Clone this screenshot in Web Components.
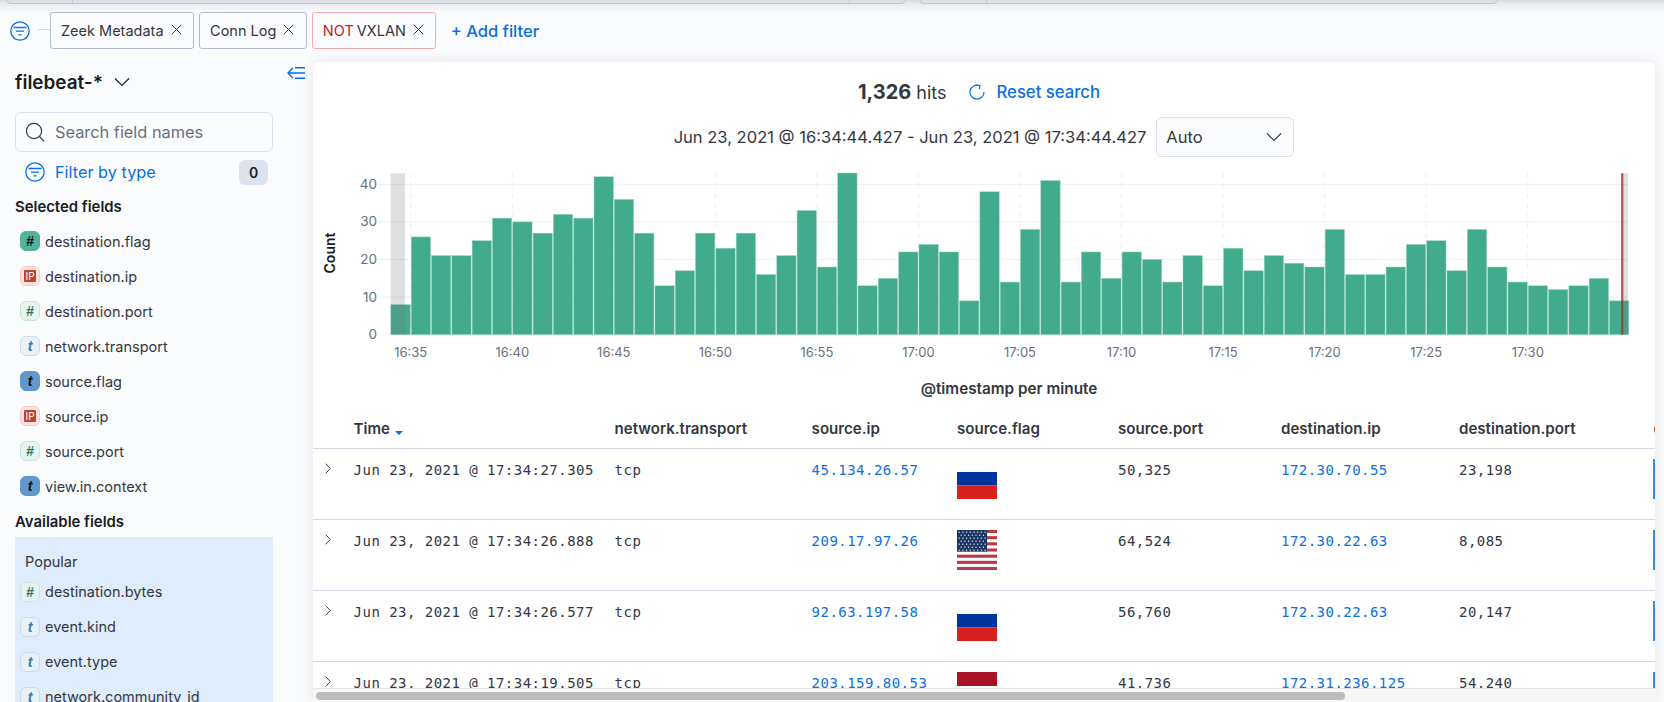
<!DOCTYPE html>
<html>
<head>
<meta charset="utf-8">
<title>Discover</title>
<style>
  html, body { margin:0; height:702px; overflow:hidden; background:#fafbfd; font-family:Inter, "Liberation Sans", sans-serif; color:#343741; }
</style>
</head>
<body>
<top-strip></top-strip>
<filter-bar>
  <filter-pill>Zeek Metadata</filter-pill>
  <filter-pill>Conn Log</filter-pill>
  <filter-pill negated>VXLAN</filter-pill>
</filter-bar>
<main-area>
  <field-sidebar slot="side">
    <field-item type="number-strong">destination.flag</field-item>
    <field-item type="ip">destination.ip</field-item>
    <field-item type="number">destination.port</field-item>
    <field-item type="string">network.transport</field-item>
    <field-item type="string-strong">source.flag</field-item>
    <field-item type="ip">source.ip</field-item>
    <field-item type="number">source.port</field-item>
    <field-item type="string-strong">view.in.context</field-item>
    <field-item slot="popular" type="number">destination.bytes</field-item>
    <field-item slot="popular" type="string">event.kind</field-item>
    <field-item slot="popular" type="string">event.type</field-item>
    <field-item slot="popular" type="string">network.community_id</field-item>
  </field-sidebar>
  <results-panel>
    <hits-row></hits-row>
    <date-row></date-row>
    <hits-chart></hits-chart>
    <doc-table></doc-table>
    <h-scrollbar></h-scrollbar>
  </results-panel>
</main-area>

<script>
const BLUE = '#0a6fe0'
const filterIcon = `<svg width="20" height="20" viewBox="0 0 20 20" fill="none" stroke="${BLUE}" stroke-width="1.3" style="display:block"><circle cx="10" cy="10" r="9.2"/><path d="M3.5 6.5h13M6 10.2h8M8.4 13.8h3.2"/></svg>`

class TopStrip extends HTMLElement {
  constructor() {
    super()
    this.attachShadow({mode:'open'}).innerHTML = `
      <style>
        :host { display:flex; height:12px; background:linear-gradient(#d9dade 0, #e8e9ee 4px, #fafbfd 12px); }
        .box { height:3px; border:1px solid #c3c6cf; border-top:0; border-radius:0 0 5px 5px; display:flex; box-sizing:content-box; }
        .a { margin-left:7px; width:896px; }
        .b { margin-left:15px; width:575px; }
        i { display:block; border-left:1px solid #c3c6cf; }
      </style>
      <div class="box a"><i style="margin-left:64px"></i><i style="margin-left:776px"></i></div>
      <div class="box b"><i style="margin-left:65px"></i></div>`
  }
}
customElements.define('top-strip', TopStrip)

class FilterBar extends HTMLElement {
  constructor() {
    super()
    this.attachShadow({mode:'open'}).innerHTML = `
      <style>
        :host { display:flex; align-items:center; height:37px; padding-left:10px; margin-bottom:13px; }
        .line { width:12px; height:1px; background:#d3dae6; margin:0 0 2px 8px; }
        .pills { display:flex; gap:5px; }
        .add { margin-left:14.5px; color:${BLUE}; font-size:16.5px; font-weight:500; white-space:nowrap; }
      </style>
      ${filterIcon}
      <div class="line"></div>
      <div class="pills"><slot></slot></div>
      <div class="add">+ Add filter</div>`
  }
}
customElements.define('filter-bar', FilterBar)

class FilterPill extends HTMLElement {
  constructor() {
    super()
    this.attachShadow({mode:'open'}).innerHTML = `
      <style>
        :host { display:flex; align-items:center; height:35px; padding:0 11.5px 0 10px; border:1px solid #b3bccd; border-radius:3px; background:#fbfcfd; font-size:14.5px; color:#343741; white-space:nowrap; }
        :host([negated]) { border-color:#f3aaa4; }
        b { display:none; font-weight:400; color:#bd271e; margin-right:3px; }
        :host([negated]) b { display:inline; }
        svg { margin-left:7px; margin-top:-2px; }
      </style>
      <b>NOT</b><slot></slot>
      <svg width="11" height="11" viewBox="0 0 11 11" stroke="#343741" stroke-width="1"><path d="M.8.8l9.4 9.4M10.2.8L.8 10.2"/></svg>`
  }
}
customElements.define('filter-pill', FilterPill)

class MainArea extends HTMLElement {
  constructor() {
    super()
    this.attachShadow({mode:'open'}).innerHTML = `
      <style>:host { display:flex; height:640px; }</style>
      <slot name="side"></slot><slot></slot>`
  }
}
customElements.define('main-area', MainArea)

class FieldItem extends HTMLElement {
  constructor() {
    super()
    const type = this.getAttribute('type')
    let glyph = type.startsWith('number') ? '#' : 't'
    if (type == 'ip') glyph = '<span class="ip">IP</span>'
    this.attachShadow({mode:'open'}).innerHTML = `
      <style>
        :host { display:flex; align-items:center; height:35px; padding-left:5px; font-size:14.5px; color:#343741; }
        .icon { width:20px; height:20px; box-sizing:border-box; border-radius:6px; border:1px solid; margin-right:5px; display:flex; align-items:center; justify-content:center; font:italic 700 14px "Liberation Sans", sans-serif; }
        .number-strong { background:#52b398; border-color:#52b398; color:#111; }
        .number { background:#e6f3ee; border-color:#c7e5da; color:#2d7a5f; }
        .string { background:#e9f1f8; border-color:#c9dcec; color:#3b7ca8; }
        .string-strong { background:#6098cb; border-color:#6098cb; color:#111; }
        .ip-type { background:#fde3df; border-color:#f9c6bf; }
        .ip { display:block; width:12px; height:12px; border-radius:1px; background:#b8452f; color:#fff; font:400 10px/12px Inter, sans-serif; text-align:center; }
      </style>
      <div class="icon ${type == 'ip' ? 'ip-type' : type}">${glyph}</div><slot></slot>`
  }
}
customElements.define('field-item', FieldItem)

class FieldSidebar extends HTMLElement {
  constructor() {
    super()
    this.attachShadow({mode:'open'}).innerHTML = `
      <style>
        :host { display:block; width:313px; flex:none; box-sizing:border-box; padding-left:15px; overflow:hidden; height:640px; }
        .head { display:flex; align-items:center; height:40px; padding-right:8px; }
        .title { font-size:18.9px; font-weight:600; color:#1a1c21; }
        .chev { margin-left:11px; }
        .collapse { margin-left:auto; align-self:flex-start; margin-top:5px; }
        .search { display:flex; align-items:center; margin-top:10px; width:258px; height:40px; box-sizing:border-box; border:1px solid #dde0ef; border-radius:6px; background:#fbfcfd; padding-left:9px; color:#69707d; font-size:16.35px; }
        .search svg { margin-right:9px; }
        .type { display:flex; align-items:center; height:26px; margin-top:7px; padding-left:10px; width:243px; color:${BLUE}; font-size:16.3px; }
        .type svg { margin-right:10px; }
        .badge { margin-left:auto; width:29px; height:25px; border-radius:6px; background:#dde3ec; color:#1a1c21; font-size:14px; font-weight:600; display:flex; align-items:center; justify-content:center; }
        h3 { margin:0; font-size:14.9px; line-height:22px; font-weight:600; color:#1a1c21; }
        .sel { margin:11px 0 5.5px; }
        .ava { margin:7.5px 0 4px; }
        .popular { width:258px; height:200px; background:#deecfb; }
        .popular p { margin:0 0 1px; padding:14px 0 0 10px; font-size:14.5px; line-height:22px; color:#343741; }
      </style>
      <div class="head">
        <div class="title">filebeat-*</div>
        <svg class="chev" width="16" height="10" viewBox="0 0 16 10" fill="none" stroke="#1a1c21" stroke-width="1.2"><path d="M1 1.5l7 7 7-7"/></svg>
        <svg class="collapse" width="18" height="12" viewBox="0 0 18 12" fill="none" stroke="${BLUE}" stroke-width="1.4"><path d="M6 .8L1 6l5 5.2M1 6h17M8 .8h10M8 11.2h10"/></svg>
      </div>
      <div class="search">
        <svg width="21" height="20" viewBox="0 0 21 20" fill="none" stroke="#343741" stroke-width="1.2"><circle cx="9" cy="9" r="7.6"/><path d="M14.5 14.5l4.5 4.8"/></svg>
        Search field names
      </div>
      <div class="type">${filterIcon}Filter by type<div class="badge">0</div></div>
      <h3 class="sel">Selected fields</h3>
      <slot></slot>
      <h3 class="ava">Available fields</h3>
      <div class="popular"><p>Popular</p><slot name="popular"></slot></div>`
  }
}
customElements.define('field-sidebar', FieldSidebar)

class ResultsPanel extends HTMLElement {
  constructor() {
    super()
    this.attachShadow({mode:'open'}).innerHTML = `
      <style>
        :host { display:block; width:1342px; height:640px; flex:none; background:#fff; border-radius:6px 6px 0 0; overflow:hidden; box-shadow:0 0 14px rgba(80,90,110,.13); }
      </style>
      <slot></slot>`
  }
}
customElements.define('results-panel', ResultsPanel)

class HitsRow extends HTMLElement {
  constructor() {
    super()
    this.attachShadow({mode:'open'}).innerHTML = `
      <style>
        :host { display:flex; align-items:center; justify-content:center; height:30px; margin-top:15px; padding-right:10px; color:#343741; font-size:18px; }
        b { font-size:20px; font-weight:700; margin-right:5px; }
        svg { margin:0 12px 0 22px; }
        a { color:${BLUE}; font-weight:500; font-size:16.7px; }
      </style>
      <b>1,326</b> hits
      <svg width="16" height="16" viewBox="0 0 16 16" fill="none" stroke="${BLUE}" stroke-width="1.2"><path d="M10.5 1.6A7 7 0 1 0 15 8"/><path d="M7.6 1.2l3.4.5-.6 3.3"/></svg>
      <a>Reset search</a>`
  }
}
customElements.define('hits-row', HitsRow)

class DateRow extends HTMLElement {
  constructor() {
    super()
    this.attachShadow({mode:'open'}).innerHTML = `
      <style>
        :host { display:flex; align-items:center; justify-content:center; gap:10px; height:40px; margin-top:10px; font-size:16.55px; color:#343741; }
        .select { width:138px; height:40px; box-sizing:border-box; border:1px solid #dde0ef; border-radius:6px; background:#fbfcfd; display:flex; align-items:center; justify-content:space-between; padding:0 11px 0 9px; }
      </style>
      <div>Jun 23, 2021 @ 16:34:44.427 - Jun 23, 2021 @ 17:34:44.427</div>
      <div class="select">Auto<svg width="16" height="10" viewBox="0 0 16 10" fill="none" stroke="#343741" stroke-width="1.1"><path d="M1 1.5l7 7 7-7"/></svg></div>`
  }
}
customElements.define('date-row', DateRow)

class HitsChart extends HTMLElement {
  constructor() {
    super()
    const values = [8,26,21,21,25,31,30,27,32,31,42,36,27,13,17,27,23,27,16,21,33,18,43,13,15,22,24,22,9,38,14,28,41,14,22,15,22,20,14,21,13,23,17,21,19,18,28,16,16,18,24,25,17,28,18,14,13,12,13,15,9]
    const labels = ['16:35','16:40','16:45','16:50','16:55','17:00','17:05','17:10','17:15','17:20','17:25','17:30']
    const step = 20.31, x0 = 390.4, base = 334.7, top = 173.3, right = 1628
    let grid = '', bars = '', ticks = ''
    for (let v = 0; v <= 40; v += 10) {
      const y = base - v * 3.76
      if (v) grid += `<line x1="379" x2="${right}" y1="${y}" y2="${y}" stroke="#eceef2" stroke-width="1"/>`
      ticks += `<text x="377" y="${y + 4.5}" text-anchor="end" font-size="13.5" fill="#69707d">${v}</text>`
    }
    labels.forEach((l, i) => {
      const x = x0 + step + i * step * 5
      grid += `<line x1="${x}" x2="${x}" y1="${top}" y2="${base}" stroke="#eceef2" stroke-dasharray="5 5"/>`
      ticks += `<text x="${x}" y="357" text-anchor="middle" font-size="13" fill="#69707d">${l}</text>`
    })
    values.forEach((v, i) => {
      const h = v * 3.76
      bars += `<rect x="${x0 + i * step + .5}" y="${base - h}" width="${step - 1}" height="${h}" fill="#43ab8d" stroke="#8fd1bb" stroke-width=".5"/>`
    })
    this.attachShadow({mode:'open'}).innerHTML = `
      <style>
        :host { display:block; height:236px; margin-top:7px; }
        svg { display:block; font-family:Inter, sans-serif; }
      </style>
      <svg width="1342" height="236" viewBox="313 164 1342 236">
        ${grid}
        ${bars}
        <rect x="390.6" y="${top}" width="14.4" height="${base - top}" fill="#69707d" fill-opacity=".22"/>
        <rect x="1622" y="${top}" width="6" height="${base - top}" fill="#69707d" fill-opacity=".22"/>
        <rect x="1621" y="${top}" width="2.4" height="${base - top}" fill="#bd271e" fill-opacity=".75"/>
        ${ticks}
        <text transform="translate(335 253) rotate(-90)" text-anchor="middle" font-size="14" font-weight="600" fill="#1a1c21">Count</text>
        <text x="1009" y="394" text-anchor="middle" font-size="15.3" font-weight="600" fill="#343741">@timestamp per minute</text>
      </svg>`
  }
}
customElements.define('hits-chart', HitsChart)

const flagRu = `<svg width="40" height="40" viewBox="0 0 40 40"><rect y="13" width="40" height="13.5" fill="#00339b"/><rect y="26.5" width="40" height="13.5" fill="#d8201f"/></svg>`
const flagRed = `<svg width="40" height="40" viewBox="0 0 40 40"><rect width="40" height="14" fill="#a81326"/></svg>`
function flagUs() {
  let s = ''
  for (let i = 0; i < 13; i += 2) s += `<rect y="${i * 3.08}" width="40" height="3.08" fill="#b93a45"/>`
  s += `<rect width="30" height="21.5" fill="#1c3663"/>`
  for (let r = 0; r < 7; r++) for (let c = 0; c < (r % 2 ? 7 : 8); c++)
    s += `<rect x="${(r % 2 ? 3.6 : 1.6) + c * 3.7}" y="${1.6 + r * 3}" width="1.2" height="1.2" fill="#e8edf5"/>`
  return `<svg width="40" height="40" viewBox="0 0 40 40">${s}</svg>`
}

class TableRow extends HTMLElement {
  constructor() {
    super()
    const g = n => this.getAttribute(n)
    const flag = g('flag') == 'us' ? flagUs() : g('flag') == 'red' ? flagRed : flagRu
    this.attachShadow({mode:'open'}).innerHTML = `
      <style>
        :host { display:grid; grid-template-columns:var(--cols); height:71px; box-sizing:border-box; border-bottom:1px solid #d3dae6; padding-top:10px; font:14px/23px "DejaVu Sans Mono", monospace; letter-spacing:.47px; color:#343741; white-space:nowrap; }
        svg { display:block; }
        .chev { margin:4px 0 0 12px; }
        a { color:${BLUE}; }
        .edge { width:3px; height:40px; background:#358ee0; }
      </style>
      <div><svg class="chev" width="6" height="11" viewBox="0 0 6 11" fill="none" stroke="#343741" stroke-width="1"><path d="M.7.7l4.6 4.8-4.6 4.8"/></svg></div>
      <div>${g('time')}</div><div>tcp</div><div><a>${g('src')}</a></div>
      <div>${flag}</div><div>${g('sport')}</div><div><a>${g('dst')}</a></div><div>${g('dport')}</div>
      <div class="edge"></div>`
  }
}
customElements.define('table-row', TableRow)

class DocTable extends HTMLElement {
  constructor() {
    super()
    const rows = [
      ['Jun 23, 2021 @ 17:34:27.305','45.134.26.57','ru','50,325','172.30.70.55','23,198'],
      ['Jun 23, 2021 @ 17:34:26.888','209.17.97.26','us','64,524','172.30.22.63','8,085'],
      ['Jun 23, 2021 @ 17:34:26.577','92.63.197.58','ru','56,760','172.30.22.63','20,147'],
      ['Jun 23, 2021 @ 17:34:19.505','203.159.80.53','red','41,736','172.31.236.125','54,240'],
    ]
    this.attachShadow({mode:'open'}).innerHTML = `
      <style>
        :host { display:block; height:288px; overflow:hidden; --cols:40.6px 261px 197px 145.4px 161px 163px 178px 194.5px 160px; }
        .inner { width:1500px; }
        .head { display:grid; grid-template-columns:var(--cols); height:49px; box-sizing:border-box; border-bottom:1px solid #d3dae6; align-items:center; font-size:15.1px; font-weight:600; color:#343741; white-space:nowrap; padding-top:8px; }
        .sort { display:inline-block; margin-left:5px; vertical-align:-1px; border:4px solid transparent; border-top:4.5px solid ${BLUE}; border-bottom:0; }
      </style>
      <div class="inner">
        <div class="head"><div></div><div>Time<span class="sort"></span></div><div>network.transport</div><div>source.ip</div><div>source.flag</div><div>source.port</div><div>destination.ip</div><div>destination.port</div><div>destination.flag</div></div>
        ${rows.map(r => `<table-row time="${r[0]}" src="${r[1]}" flag="${r[2]}" sport="${r[3]}" dst="${r[4]}" dport="${r[5]}"></table-row>`).join('')}
      </div>`
  }
}
customElements.define('doc-table', DocTable)

class HScrollbar extends HTMLElement {
  constructor() {
    super()
    this.attachShadow({mode:'open'}).innerHTML = `
      <style>
        :host { display:block; height:14px; box-sizing:border-box; border-top:1px solid #e4e4e4; background:#f7f7f7; padding:3px 0 0 3px; }
        div { width:1029px; height:8px; border-radius:4px; background:#bdbdbd; }
      </style>
      <div></div>`
  }
}
customElements.define('h-scrollbar', HScrollbar)
</script>
</body>
</html>
